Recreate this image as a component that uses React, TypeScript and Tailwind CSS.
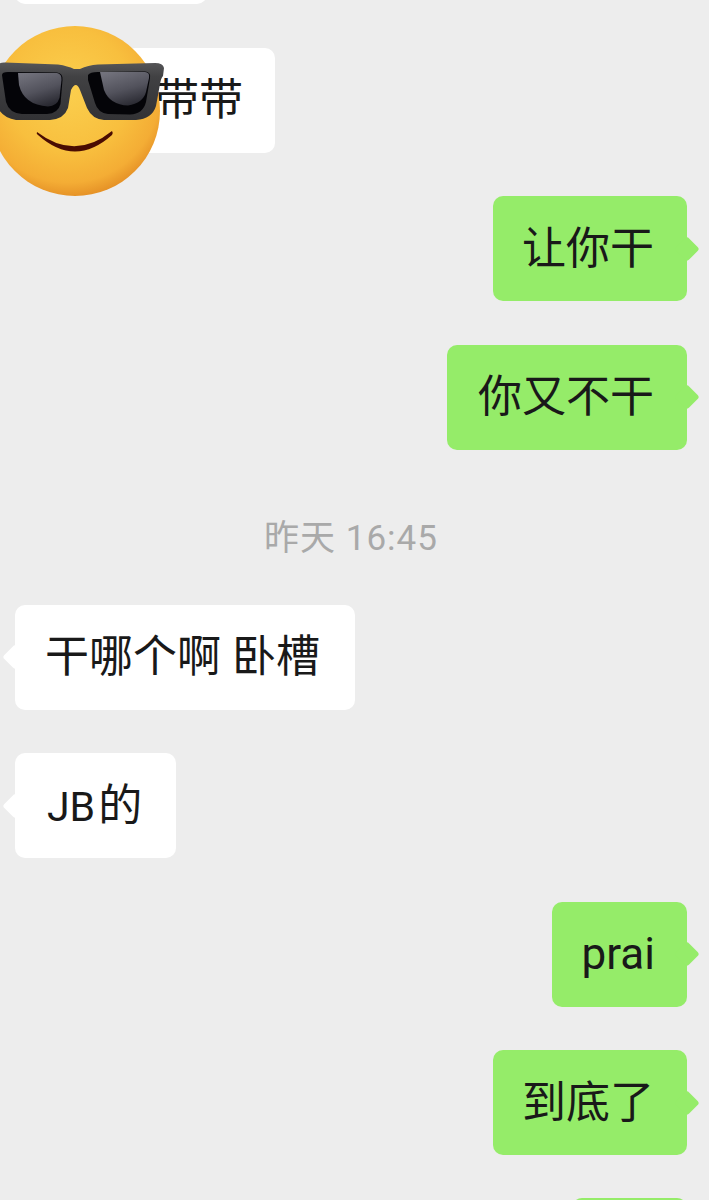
import { ReactNode } from 'react';

interface BubbleProps {
  side: 'left' | 'right';
  children?: ReactNode;
  className?: string;
}

function Bubble({ side, children, className = '' }: BubbleProps) {
  const isRight = side === 'right';
  return (
    <div
      className={`relative flex h-[105px] items-center rounded-[10px] text-[44px] leading-none text-[#191919] ${
        isRight
          ? 'justify-end self-end bg-[#95ec69] pr-[33px]'
          : 'self-start bg-white pl-[30px]'
      } ${className}`}
    >
      <span
        className={`absolute top-1/2 h-[18px] w-[18px] -translate-y-1/2 rotate-45 rounded-[3px] ${
          isRight ? '-right-[9px] bg-[#95ec69]' : '-left-[9px] bg-white'
        }`}
      />
      <span className="relative whitespace-nowrap">{children}</span>
    </div>
  );
}

// Sunglasses emoji, drawn by hand
function CoolEmoji() {
  return (
    <svg
      className="absolute left-0 top-0 z-10"
      width="170"
      height="200"
      viewBox="0 0 170 200"
    >
      <defs>
        <radialGradient id="face" cx="46%" cy="38%" r="66%">
          <stop offset="0%" stopColor="#fbcf4e" />
          <stop offset="55%" stopColor="#f8bf3e" />
          <stop offset="82%" stopColor="#f4ad35" />
          <stop offset="96%" stopColor="#e48f25" />
          <stop offset="100%" stopColor="#d07c1c" />
        </radialGradient>
        <linearGradient id="frame" x1="0" y1="0" x2="0" y2="1">
          <stop offset="0%" stopColor="#565658" />
          <stop offset="25%" stopColor="#414143" />
          <stop offset="100%" stopColor="#323235" />
        </linearGradient>
        <linearGradient id="shine" x1="0.2" y1="0" x2="0.6" y2="1">
          <stop offset="0%" stopColor="#72727c" />
          <stop offset="55%" stopColor="#52525c" />
          <stop offset="100%" stopColor="#2a2a32" />
        </linearGradient>
      </defs>
      <circle cx="75" cy="111" r="85" fill="url(#face)" />
      <path
        d="M-3 68 Q-2 62 5 62.5 L58 64.5 Q68 66 74 69 L80 69 Q88 65 98 64.5 L155 63 Q163 63 164 68 L163 76 Q161 78 160 84 L156 106 Q152 119 136 120 L104 120 Q92 119 87 108 L80 90 Q76 80 71 90 L68 108 Q64 119 50 120 L16 120 Q2 118 -3 106 Z"
        fill="url(#frame)"
      />
      <path
        d="M2 75 Q2 72 8 72 L57 72.5 Q63 73 62.5 80 L60.5 104 Q58 113.5 47 114 L22 114 Q9 113 6 102 Z"
        fill="#040408"
      />
      <path
        d="M18 73 L57 73 Q62 74 61.5 80 L59.5 98 Q57 106 48 106.5 Q24 105 19 85 Z"
        fill="url(#shine)"
      />
      <path
        d="M88 75 Q90 72 98 72 L145 71.5 Q151 72 150 78 L146 102 Q143 114 130 114.5 L108 114 Q98 113 95 103 L88 80 Z"
        fill="#040408"
      />
      <path
        d="M100 72 L145 72 Q150 72 149 78 L146 92 Q143 103 128 105.5 Q110 105 104 90 Z"
        fill="url(#shine)"
      />
      <path
        d="M37 132 Q75 161 112 131 Q113.5 133 112 135 Q75 168 38 135 Q36 134 37 132 Z"
        fill="#4a0c02"
      />
    </svg>
  );
}

export default function App() {
  return (
    <div
      className="relative h-[1200px] w-[709px] overflow-hidden bg-[#ededed]"
      style={{ fontFamily: 'Roboto, "Noto Sans CJK SC", sans-serif' }}
    >
      <CoolEmoji />
      <div className="-mt-[101px] flex flex-col gap-[43.5px] pl-[15px] pr-[22px]">
        <Bubble side="left" className="w-[192px]" />
        <Bubble side="left" className="ml-[110px] w-[150px] justify-end pr-[32px]">
          带带
        </Bubble>
        <Bubble side="right" className="w-[194px]">
          让你干
        </Bubble>
        <Bubble side="right" className="w-[240px]">
          你又不干
        </Bubble>
        <div className="flex h-[68px] items-center justify-center pt-[23px] text-[35px] leading-none tracking-[1px] text-[#a9a9a9]">
          昨天 16:45
        </div>
        <Bubble side="left" className="w-[340px]">
          干哪个啊 卧槽
        </Bubble>
        <Bubble side="left" className="w-[161px]">
          <span className="ml-[2px] text-[41px]">JB</span>
          <span className="ml-[3px]">的</span>
        </Bubble>
        <Bubble side="right" className="w-[135px]">
          <span className="-mr-px">prai</span>
        </Bubble>
        <Bubble side="right" className="w-[194px]">
          到底了
        </Bubble>
        <Bubble side="right" className="-mt-px w-[115px]" />
      </div>
    </div>
  );
}
